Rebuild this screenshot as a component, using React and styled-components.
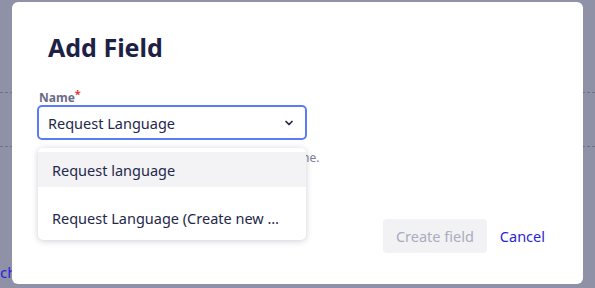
import styled, { createGlobalStyle } from "styled-components";

const Global = createGlobalStyle`
  html, body {
    margin: 0;
    padding: 0;
    width: 595px;
    height: 288px;
    overflow: hidden;
    font-family: "Noto Sans", "Open Sans", sans-serif;
  }
`;

const Backdrop = styled.div`
  position: relative;
  width: 595px;
  height: 288px;
  background: #8f91a7;
  display: flex;
  flex-direction: column;
  overflow: hidden;
`;

const Divider = styled.div`
  height: 0;
  border-top: 1px dashed #6f7187;
  margin-top: ${(p) => p.top}px;
`;

const BackLink = styled.div`
  margin-top: 115px;
  font-size: 15px;
  line-height: 20px;
  color: #2a1fd8;
`;

const Modal = styled.div`
  position: absolute;
  left: 12px;
  top: 2px;
  width: 571px;
  height: 282px;
  background: #fff;
  border-radius: 6px;
  box-sizing: border-box;
  padding: 28px 38px 0 25px;
  display: flex;
  flex-direction: column;
`;

const Title = styled.h2`
  margin: 0 0 0 11px;
  font-size: 25px;
  line-height: 34px;
  font-weight: 700;
  color: #1d2145;
`;

const Field = styled.div`
  position: relative;
  margin-top: 22px;
  width: 270px;
`;

const Label = styled.label`
  display: block;
  margin-left: 2px;
  font-size: 12px;
  line-height: 15px;
  font-weight: 700;
  color: #696c85;
  span {
    color: #e53535;
    vertical-align: 4px;
    font-size: 11px;
  }
`;

const Select = styled.div`
  height: 35px;
  box-sizing: border-box;
  border: 2px solid #5b7cf8;
  border-radius: 5px;
  display: flex;
  align-items: center;
  justify-content: space-between;
  padding: 0 10px 0 9px;
  font-size: 14.5px;
  color: #24284a;
`;

const Help = styled.div`
  margin-top: 9px;
  margin-left: 2px;
  font-size: 12px;
  letter-spacing: 0.12px;
  color: #7b7e93;
  white-space: nowrap;
`;

const Menu = styled.div`
  position: absolute;
  left: 1px;
  top: 62px;
  width: 268px;
  background: #fff;
  border-radius: 5px;
  box-shadow: 0 1px 6px rgba(30, 34, 70, 0.22);
  padding: 4px 0;
  box-sizing: border-box;
`;

const Option = styled.div`
  height: ${(p) => (p.active ? 35 : 49)}px;
  box-sizing: border-box;
  display: flex;
  align-items: ${(p) => (p.active ? "center" : "flex-end")};
  padding: ${(p) => (p.active ? "0 22px 0 14px" : "0 22px 8px 14px")};
  font-size: 14.5px;
  line-height: 20px;
  color: #24284a;
  background: ${(p) => (p.active ? "#f3f3f5" : "#fff")};
  white-space: nowrap;
  span {
    overflow: hidden;
    text-overflow: ellipsis;
  }
`;

const Footer = styled.div`
  margin-top: auto;
  margin-bottom: 31px;
  display: flex;
  justify-content: flex-end;
  align-items: center;
  gap: 13px;
`;

const Button = styled.button`
  height: 34px;
  padding: 0 13px;
  border: none;
  border-radius: 4px;
  background: #f2f2f4;
  color: #a9acbf;
  font-family: inherit;
  font-size: 14.5px;
`;

const LinkButton = styled.a`
  font-size: 14.5px;
  color: #2a1fd8;
  text-decoration: none;
`;

const Chevron = () => (
  <svg width="12" height="12" viewBox="0 0 24 24" fill="none" stroke="#24284a" strokeWidth="3.5" strokeLinecap="round" strokeLinejoin="round">
    <path d="M6 9l6 6 6-6" />
  </svg>
);

export default function App() {
  return (
    <>
      <Global />
      <Backdrop>
        <Divider top={92} />
        <Divider top={53} />
        <BackLink>ch</BackLink>
        <Modal>
          <Title>Add Field</Title>
          <Field>
            <Label>
              Name<span>*</span>
            </Label>
            <Select>
              Request Language
              <Chevron />
            </Select>
            <Help>Pick an existing field or type to create a new one.</Help>
            <Menu>
              <Option active>
                <span>Request language</span>
              </Option>
              <Option>
                <span>Request Language (Create new field)</span>
              </Option>
            </Menu>
          </Field>
          <Footer>
            <Button disabled>Create field</Button>
            <LinkButton href="#">Cancel</LinkButton>
          </Footer>
        </Modal>
      </Backdrop>
    </>
  );
}
